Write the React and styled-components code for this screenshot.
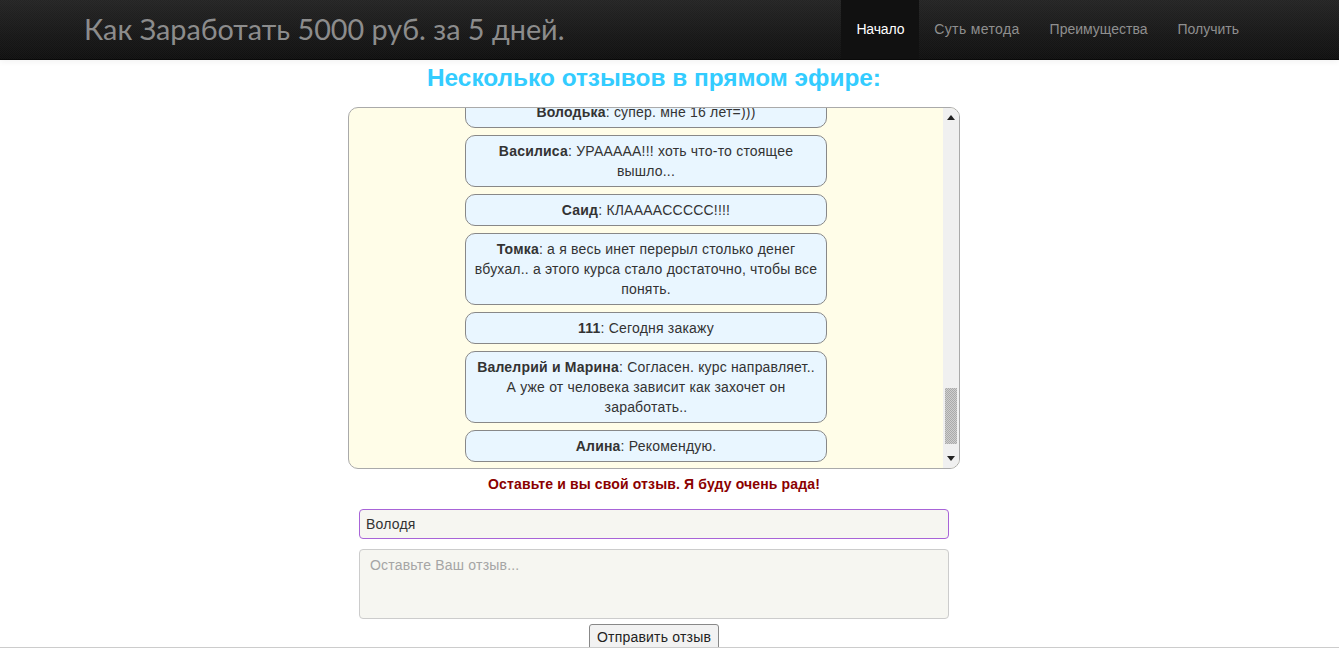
import React from "react";
import styled, { createGlobalStyle } from "styled-components";

const Global = createGlobalStyle`
  html, body { margin: 0; padding: 0; height: 648px; overflow: hidden; background: #fff; }
  body { font-family: "Liberation Sans", Arial, sans-serif; font-size: 14px; color: #333; }
  * { box-sizing: border-box; }
`;
const Page = styled.div`
  height: 648px; display: flex; flex-direction: column; overflow: hidden;
`;
const Header = styled.header`
  flex: none; height: 60px; display: flex; justify-content: space-between;
  padding: 0 85px 0 84px;
  background-color: #181818;
  background-image:
    conic-gradient(rgba(255,255,255,.025) 25%, transparent 0 50%, rgba(255,255,255,.025) 0 75%, transparent 0),
    linear-gradient(#252525, #101010);
  background-size: 2px 2px, 100% 100%;
  border-bottom: 1px solid #0a0a0a;
  box-shadow: 0 2px 6px rgba(0,0,0,.05);
`;
const Brand = styled.a`
  font-family: "Lato", sans-serif; font-size: 28.8px; line-height: 58px; color: #8c8c8c; white-space: nowrap;
`;
const Nav = styled.nav`display: flex;`;
const NavItem = styled.a`
  padding: 0 15px; line-height: 58px; font-size: 14px;
  letter-spacing: ${p => p.$spacing}px;
  color: ${p => (p.$active ? "#fff" : "#8f8f8f")};
  background: ${p => (p.$active ? "#111" : "transparent")};
`;
const Main = styled.main`
  flex: 1; min-height: 0; overflow: hidden; display: flex; flex-direction: column; align-items: center;
  padding-right: 31px;
`;
const Title = styled.h1`
  flex: none; margin: 0; height: 47px; line-height: 36px; font-size: 24.4px; font-weight: bold; color: #33ccff;
`;
const Box = styled.section`
  flex: none; width: 612px; height: 362px; display: flex; overflow: hidden;
  border: 1px solid #aaa; border-radius: 10px; background: #fffde8;
`;
const Feed = styled.div`
  flex: 1; min-width: 0; display: flex; flex-direction: column; justify-content: flex-end; align-items: center;
  gap: 7px; padding-bottom: 6px; overflow: hidden;
`;
const Bubble = styled.p`
  flex: none; width: 362px; margin: 0; padding: 5px 8px; text-align: center; line-height: 20px;
  background: #e9f6ff; border: 1px solid #888; border-radius: 10px; color: #333; letter-spacing: .2px;
`;
const Track = styled.div`
  flex: none; width: 16px; background: #f0f0f0; display: flex; flex-direction: column; align-items: center;
  padding: 7px 0;
`;
const Arrow = styled.svg`display: block; flex: none; width: 8px; height: 5px; fill: #222;`;
const Thumb = styled.div`
  flex: none; width: 12px; height: 56px; margin-top: auto; margin-bottom: 12px;
  background-color: #cfcfcf;
  background-image: conic-gradient(#aaa 25%, transparent 0 50%, #aaa 0 75%, transparent 0);
  background-size: 2px 2px;
`;
const Note = styled.p`
  flex: none; margin: 7px 0 0; height: 33px; line-height: 16px; font-weight: bold; font-size: 14px; color: #8b0000; letter-spacing: .14px;
`;
const Form = styled.form`
  flex: none; width: 590px; display: flex; flex-direction: column; align-items: center;
`;
const NameInput = styled.input`
  width: 100%; height: 30px; padding: 0 6px; font: 14px "Liberation Sans", sans-serif; color: #333;
  background: #f6f6f1; border: 1px solid #a864d8; border-radius: 4px; outline: none; letter-spacing: .2px;
`;
const Message = styled.textarea`
  width: 100%; height: 70px; margin-top: 10px; padding: 6px 10px; resize: none; display: block;
  font: 14px/18px "Liberation Sans", sans-serif; background: #f6f6f1; border: 1px solid #ccc; border-radius: 4px; outline: none; letter-spacing: .2px;
  &::placeholder { color: #a5a5a5; opacity: 1; }
`;
const Send = styled.button`
  flex: none; width: 130px; height: 26px; margin-top: 5px; padding: 0; font: 14px "Liberation Sans", sans-serif; color: #222; letter-spacing: .2px;
  background: #f2f2f2; border: 1px solid #888; border-radius: 3px;
`;
const BottomLine = styled.div`flex: none; height: 1px; background: #ccc;`;

const reviews = [
  ["Володька", "супер. мне 16 лет=)))"],
  ["Василиса", "УРААААА!!! хоть что-то стоящее вышло..."],
  ["Саид", "КЛАААACCCCC!!!!"],
  ["Томка", "а я весь инет перерыл столько денег вбухал.. а этого курса стало достаточно, чтобы все понять."],
  ["111", "Сегодня закажу"],
  ["Валелрий и Марина", "Согласен. курс направляет.. А уже от человека зависит как захочет он заработать.."],
  ["Алина", "Рекомендую."],
];
const links = [
  { label: "Начало", spacing: -0.15 },
  { label: "Суть метода", spacing: 0.36 },
  { label: "Преимущества", spacing: 0 },
  { label: "Получить", spacing: 0 },
];

export default function App() {
  return (
    <Page>
      <Global />
      <Header>
        <Brand>Как Заработать 5000 руб. за 5 дней.</Brand>
        <Nav>
          {links.map((l, i) => <NavItem key={l.label} $active={i === 0} $spacing={l.spacing}>{l.label}</NavItem>)}
        </Nav>
      </Header>
      <Main>
        <Title>Несколько отзывов в прямом эфире:</Title>
        <Box>
          <Feed>
            {reviews.map(([n, t]) => <Bubble key={n}><strong>{n}</strong>: {t}</Bubble>)}
          </Feed>
          <Track>
            <Arrow viewBox="0 0 8 5"><path d="M4 0l4 5H0z" /></Arrow>
            <Thumb />
            <Arrow viewBox="0 0 8 5"><path d="M0 0h8L4 5z" /></Arrow>
          </Track>
        </Box>
        <Note>Оставьте и вы свой отзыв. Я буду очень рада!</Note>
        <Form>
          <NameInput defaultValue="Володя" />
          <Message placeholder="Оставьте Ваш отзыв..." />
          <Send type="button">Отправить отзыв</Send>
        </Form>
      </Main>
      <BottomLine />
    </Page>
  );
}
